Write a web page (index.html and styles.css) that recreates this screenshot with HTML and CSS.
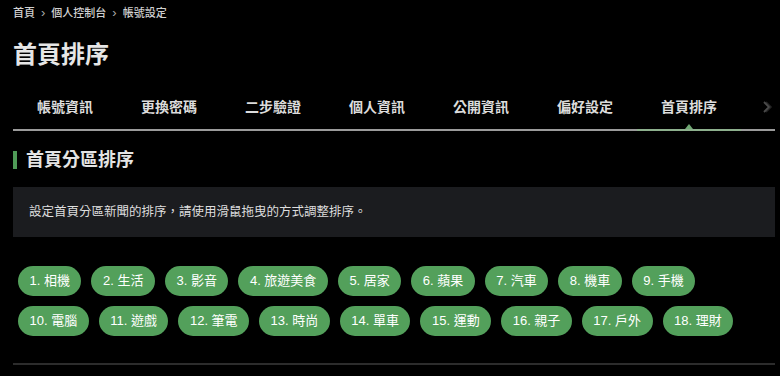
FILE: index.html
```html
<!DOCTYPE html>
<html lang="zh-Hant">
<head>
	<meta charset="UTF-8">
	<title>首頁排序</title>
	<link rel="stylesheet" href="styles.css">
</head>
<body>
<div class="crumb">
    <a href="#">首頁</a><span class="sep">›</span><a href="#">個人控制台</a><span class="sep">›</span><a href="#">帳號設定</a>
</div>
<h1 class="title">首頁排序</h1>
<div class="tabs">
    <ul class="tabList">
        <li>帳號資訊</li>
        <li>更換密碼</li>
        <li>二步驗證</li>
        <li>個人資訊</li>
        <li>公開資訊</li>
        <li>偏好設定</li>
        <li class="on">首頁排序</li>
    </ul>
    <div class="tabNext">
        <svg width="12" height="14" viewBox="0 0 12 14"><path d="M5 2l5 5-5 5" fill="none" stroke="#262626" stroke-width="1.5"/><path d="M3 2l5 5-5 5" fill="none" stroke="#4a4a4a" stroke-width="1.8"/></svg>
    </div>
</div>
<!--/tabs-->
<h2 class="secTitle">首頁分區排序</h2>
<div class="note">設定首頁分區新聞的排序，請使用滑鼠拖曳的方式調整排序。</div>
<ul class="pills">
    <li>1. 相機</li>
    <li>2. 生活</li>
    <li>3. 影音</li>
    <li>4. 旅遊美食</li>
    <li>5. 居家</li>
    <li>6. 蘋果</li>
    <li>7. 汽車</li>
    <li>8. 機車</li>
    <li>9. 手機</li>
    <li>10. 電腦</li>
    <li>11. 遊戲</li>
    <li>12. 筆電</li>
    <li>13. 時尚</li>
    <li>14. 單車</li>
    <li>15. 運動</li>
    <li>16. 親子</li>
    <li>17. 戶外</li>
    <li>18. 理財</li>
</ul>
<!--/pills-->
</body>
</html>
```

FILE: styles.css
```css
body,div,ul,li,h1,h2 {margin:0;padding:0;}
body {
	background:#000;
	color:#ddd;
	padding:0 5px 0 13px;
	font-family:"Liberation Sans","Noto Sans CJK TC",sans-serif;
}
ul {list-style:none;}
.crumb {
	padding-top:5px;
	font-size:11px;
	line-height:16px;
	font-weight:500;
	color:#d0d0d0;
}
.crumb a {
	color:#d0d0d0;
	text-decoration:none;
}
.crumb .sep {
	margin:0 6px;
	color:#aaa;
	font-size:13px;
}
.title {
	margin-top:18px;
	font-size:24px;
	line-height:32px;
	font-weight:bold;
	color:#e6e6e6;
}
.tabs {
	display:flex;
	align-items:center;
	margin-top:14px;
	border-bottom:2px solid #9b9b9b;
}
.tabList {
	display:flex;
}
.tabList li {
	position:relative;
	padding:12px 24px;
	font-size:14px;
	line-height:20px;
	font-weight:bold;
	color:#dcdcdc;
}
.tabList li.on:after {
	content:"";
	position:absolute;
	left:0;right:0;
	bottom:-2px;
	height:2px;
	background:#8db08d;
}
.tabList li.on:before {
	content:"";
	position:absolute;
	left:50%;
	bottom:0;
	margin-left:-4px;
	border:4px solid transparent;
	border-top:0;
	border-bottom:5px solid #6fa873;
}
.tabNext {
	flex:1;
	display:flex;
	justify-content:flex-end;
	padding-right:2px;
}
.tabNext svg {display:block;}
.secTitle {
	margin-top:20px;
	padding-left:9px;
	border-left:4px solid #4f9a57;
	font-size:18px;
	line-height:18px;
	font-weight:bold;
	color:#e4e4e4;
}
.note {
	margin-top:18px;
	padding:16px;
	background:#1b1c1f;
	font-size:12.5px;
	line-height:18px;
	color:#dedede;
}
.pills {
	display:flex;
	flex-wrap:wrap;
	padding:24px 0 22px;
	border-bottom:2px solid #2c2c2c;
}
.pills li {
	margin:5px;
	padding:0 11.5px;
	height:30px;
	line-height:30px;
	border-radius:15px;
	background:#53a05b;
	color:#fff;
	font-size:13px;
}
```
